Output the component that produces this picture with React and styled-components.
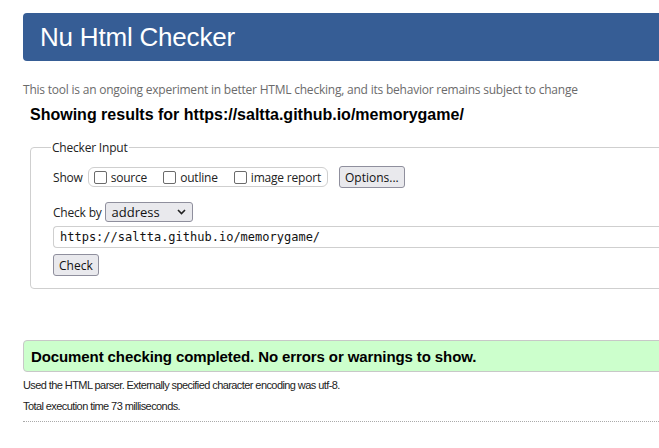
import * as React from 'react';
import styled, { createGlobalStyle } from 'styled-components';

const GlobalStyle = createGlobalStyle`
  html, body {
    margin: 0;
    padding: 0;
    background: #ffffff;
    overflow: hidden;
  }
  body {
    font-family: 'Liberation Sans', Arial, sans-serif;
    color: #000;
  }
`;

const Page = styled.div`
  width: 659px;
  height: 448px;
  padding: 13px 0 0 23px;
  box-sizing: border-box;
  overflow: hidden;
`;

const Header = styled.div`
  background: #365d95;
  height: 48px;
  border-radius: 4px 0 0 4px;
  margin-right: -10px;
  display: flex;
  align-items: center;
  padding-left: 17px;
  & > h1 {
    margin: 0;
    color: #ffffff;
    font-weight: normal;
    font-size: 26px;
    letter-spacing: -0.2px;
  }
`;

const Note = styled.p`
  margin: 20px 0 0;
  font-family: 'Open Sans', sans-serif;
  font-size: 12px;
  color: #6b6b6b;
  letter-spacing: -0.22px;
`;

const Results = styled.h2`
  margin: 8px 0 0 7px;
  font-size: 16px;
  font-weight: bold;
`;

const Fieldset = styled.fieldset`
  margin: 15px -20px 0 7px;
  padding: 6px 0 12px 22px;
  border: 1px solid #cfcfcf;
  border-radius: 4px;
  font-family: 'Open Sans', sans-serif;
  font-size: 12px;
  & > legend {
    padding: 0 1px;
    margin-left: -2px;
    color: #222;
    letter-spacing: -0.2px;
  }
`;

const Row = styled.div`
  display: flex;
  align-items: center;
  margin-top: ${(p) => p.top || 0}px;
  color: #222;
`;

const Label = styled.span`
  letter-spacing: -0.2px;
`;

const ShowGroup = styled.div`
  display: flex;
  align-items: center;
  height: 18px;
  margin-left: 5px;
  padding: 0 6px 0 5px;
  border: 1px solid #cfcfcf;
  border-radius: 6px;
  gap: 16px;
`;

const CheckItem = styled.label`
  display: flex;
  align-items: center;
  gap: 4px;
  font-size: 12px;
  letter-spacing: -0.2px;
  color: #222;
`;

const Box = styled.span`
  width: 11px;
  height: 11px;
  border: 1px solid #6b6b6b;
  border-radius: 2px;
  background: #fff;
`;

const Button = styled.button`
  display: block;
  font-family: 'Open Sans', sans-serif;
  font-size: 12px;
  color: #111;
  background: #e9e9ed;
  border: 1px solid #8f8f9d;
  border-radius: 3px;
  padding: 0 5px;
  height: 22px;
  margin-left: ${(p) => p.left || 0}px;
  margin-top: ${(p) => p.top || 0}px;
`;

const Select = styled.div`
  display: flex;
  align-items: center;
  justify-content: space-between;
  width: 88px;
  height: 20px;
  margin-left: 3px;
  padding: 0 6px;
  box-sizing: border-box;
  background: #e9e9ed;
  border: 1px solid #8f8f9d;
  border-radius: 3px;
  font-size: 13px;
  color: #111;
`;

const UrlInput = styled.div`
  margin-top: 4px;
  height: 20px;
  display: flex;
  align-items: center;
  padding-left: 6px;
  border: 1px solid #cfcfcf;
  border-right: none;
  border-radius: 4px 0 0 4px;
  font-family: 'DejaVu Sans Mono', 'Liberation Mono', monospace;
  font-size: 12px;
  color: #111;
`;

const Success = styled.div`
  margin: 51px -10px 0 0;
  height: 30px;
  display: flex;
  align-items: center;
  padding-left: 7px;
  background: #ccffcc;
  border: 1px solid #c8c8c8;
  border-radius: 4px 0 0 4px;
  font-weight: bold;
  font-size: 15px;
  letter-spacing: -0.1px;
`;

const Detail = styled.p`
  margin: ${(p) => p.top || 0}px 0 0;
  font-size: 11px;
  line-height: 14px;
  color: #222;
  letter-spacing: -0.58px;
`;

const Rule = styled.div`
  margin-top: 8px;
  border-top: 1px dotted #aaa;
`;

const Chevron = () => (
  <svg width="9" height="6" viewBox="0 0 9 6">
    <path d="M1 1l3.5 3.5L8 1" fill="none" stroke="#222" strokeWidth="1.6" />
  </svg>
);

export default function App() {
  return (
    <Page>
      <GlobalStyle />
      <Header>
        <h1>Nu Html Checker</h1>
      </Header>
      <Note>This tool is an ongoing experiment in better HTML checking, and its behavior remains subject to change</Note>
      <Results>Showing results for https://saltta.github.io/memorygame/</Results>
      <Fieldset>
        <legend>Checker Input</legend>
        <Row top={4}>
          <Label>Show</Label>
          <ShowGroup>
            <CheckItem><Box />source</CheckItem>
            <CheckItem><Box />outline</CheckItem>
            <CheckItem><Box />image report</CheckItem>
          </ShowGroup>
          <Button left={11}>Options...</Button>
        </Row>
        <Row top={14}>
          <Label>Check by</Label>
          <Select>address <Chevron /></Select>
        </Row>
        <UrlInput>https://saltta.github.io/memorygame/</UrlInput>
        <Button top={6}>Check</Button>
      </Fieldset>
      <Success>Document checking completed. No errors or warnings to show.</Success>
      <Detail top={6}>Used the HTML parser. Externally specified character encoding was utf-8.</Detail>
      <Detail top={7}>Total execution time 73 milliseconds.</Detail>
      <Rule />
    </Page>
  );
}
